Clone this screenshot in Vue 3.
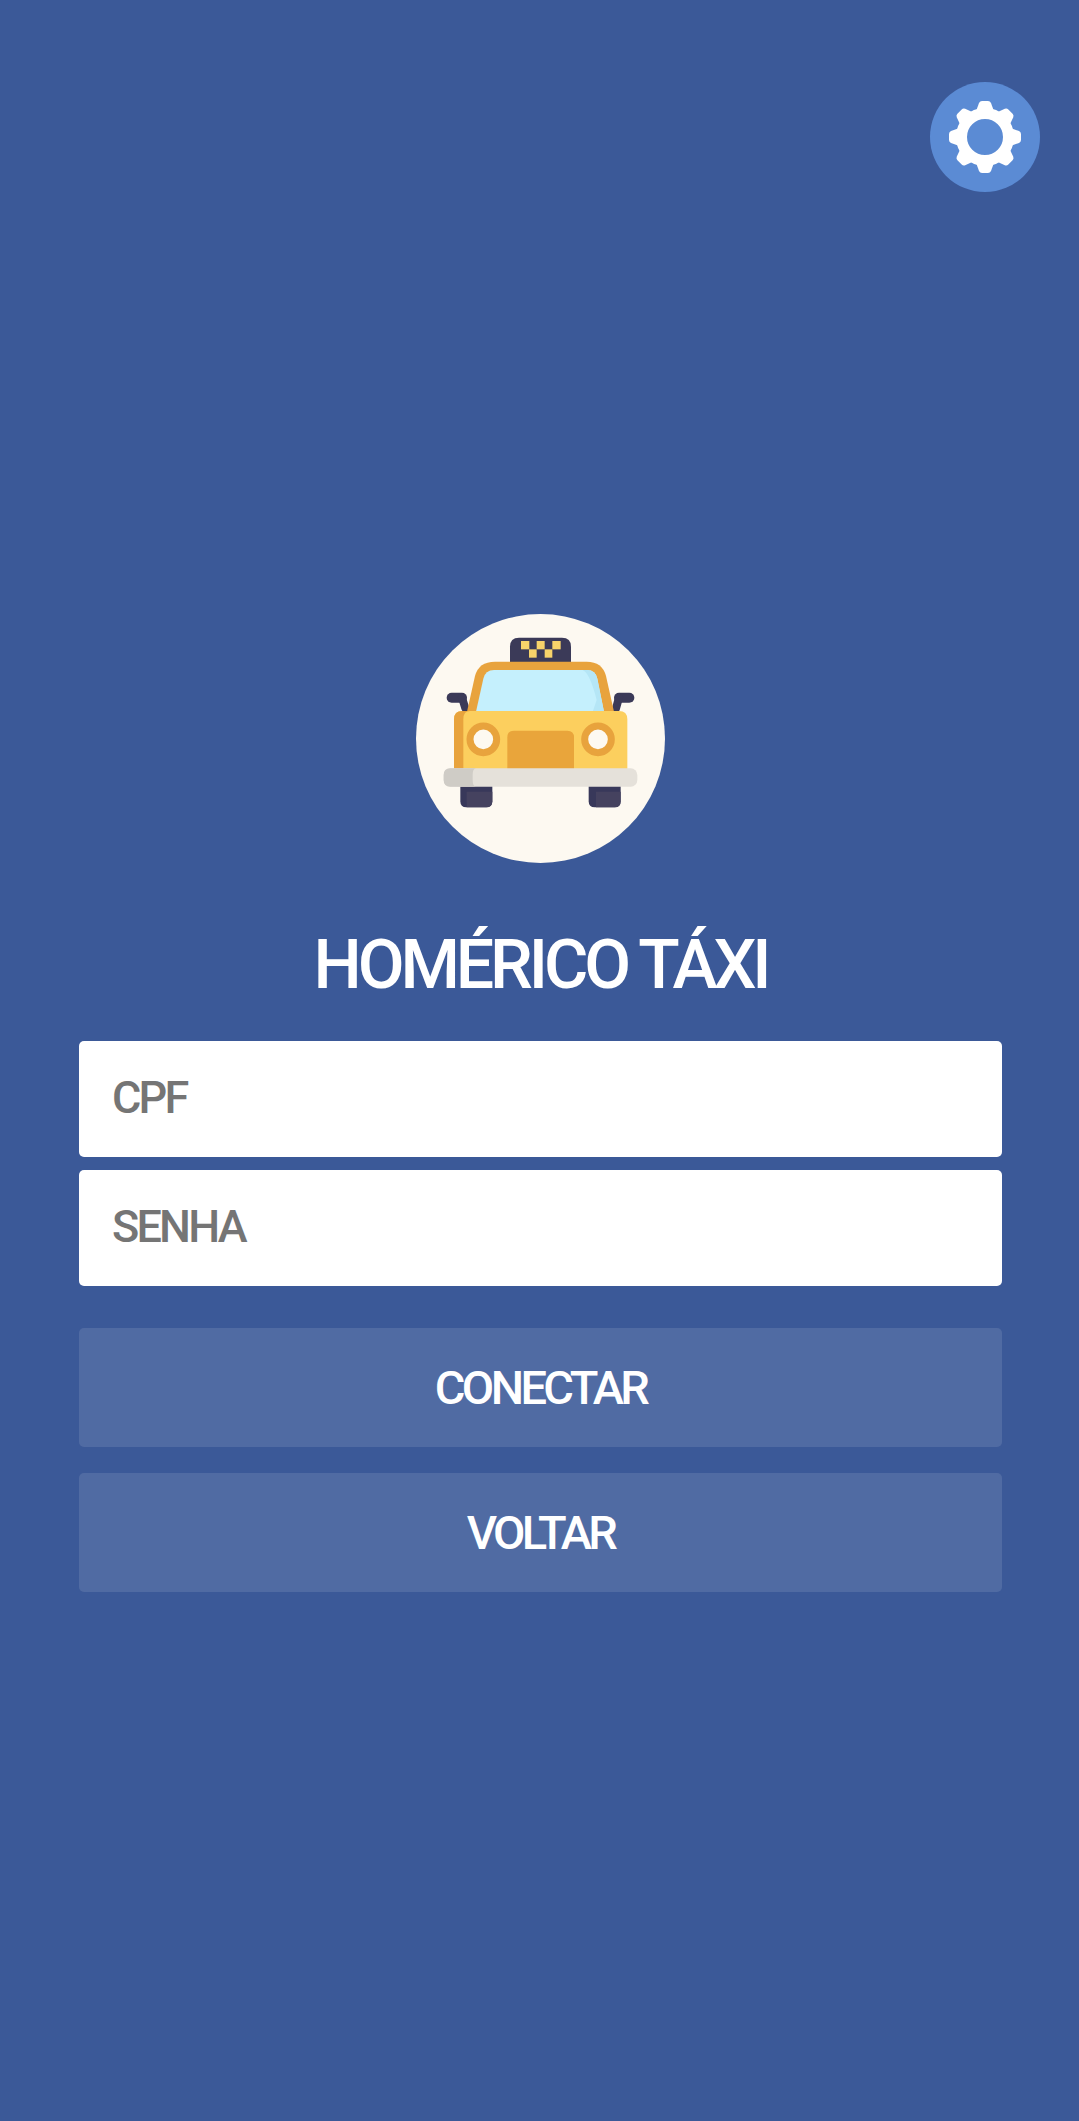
<template>
  <div class="login-page">
    <div class="top-bar">
      <button class="settings-btn" type="button" aria-label="Configurações">
        <svg viewBox="0 0 80 80" width="80" height="80">
          <path
            v-for="angle in toothAngles"
            :key="angle"
            d="M29 20L34 6Q35 4 37 4H43Q45 4 46 6L51 20Z"
            fill="#fff"
            :transform="`rotate(${angle} 40 40)`"
          />
          <circle cx="40" cy="40" r="23.5" fill="none" stroke="#fff" stroke-width="11" />
        </svg>
      </button>
    </div>

    <div class="login-content">
      <svg class="logo" viewBox="48 42 747 747" width="249" height="249">
        <circle cx="421.5" cy="415.5" r="373.5" fill="#fdf9f1" />

        <!-- placa do taxi -->
        <path d="M330 190V140Q330 113 357 113H486Q513 113 513 140V190Z" fill="#3b3a58" />
        <g fill="#f7d36a">
          <rect x="363" y="123" width="25" height="25" />
          <rect x="410" y="123" width="24" height="25" />
          <rect x="457" y="123" width="25" height="25" />
          <rect x="387" y="148" width="23" height="25" />
          <rect x="434" y="148" width="23" height="25" />
        </g>

        <!-- retrovisores -->
        <g fill="none" stroke="#3b3a58" stroke-linecap="round" stroke-linejoin="round">
          <path d="M155 293H186" stroke-width="30" />
          <path d="M186 293L196 325" stroke-width="24" />
          <path d="M688 293H657" stroke-width="30" />
          <path d="M657 293L648 325" stroke-width="24" />
        </g>

        <!-- cabine -->
        <path d="M200 340L225 228Q236 185 285 185H560Q607 185 618 228L643 340Z" fill="#e8a33d" />
        <path d="M228 335L250 236Q256 210 282 210H562Q586 210 592 236L612 335Z" fill="#c5f0fd" />
        <path d="M562 210Q586 210 592 236L612 335H578L590 300Q570 220 548 210Z" fill="#b5e6f6" />

        <!-- carroceria -->
        <path d="M162 510V358Q162 333 187 333H657Q682 333 682 358V510Z" fill="#fccf5e" />
        <path d="M162 510V358Q162 333 187 333H210Q190 333 190 358V510Z" fill="#e8a33d" />
        <circle cx="250" cy="418" r="40" fill="#fdf9f1" stroke="#e8a33d" stroke-width="21" />
        <circle cx="594" cy="418" r="40" fill="#fdf9f1" stroke="#e8a33d" stroke-width="21" />
        <path d="M322 510V412Q322 392 342 392H502Q522 392 522 412V510Z" fill="#e9a53b" />

        <!-- rodas -->
        <path d="M181 555H277V604Q277 622 259 622H199Q181 622 181 604Z" fill="#38385a" />
        <path d="M200 575H277V604Q277 622 259 622H200Z" fill="#45425f" />
        <path d="M566 555H662V604Q662 622 644 622H584Q566 622 566 604Z" fill="#38385a" />
        <path d="M588 575H662V604Q662 622 644 622H588Z" fill="#45425f" />

        <!-- para-choque -->
        <rect x="131" y="505" width="581" height="55" rx="20" fill="#e5e1da" />
        <path d="M151 505H228Q218 505 218 525V540Q218 560 228 560H151Q131 560 131 540V525Q131 505 151 505Z" fill="#cfccc6" />
      </svg>

      <h1 class="title">HOMÉRICO TÁXI</h1>

      <form class="login-form" @submit.prevent>
        <input v-model="cpf" class="field" type="text" placeholder="CPF" />
        <input v-model="senha" class="field" type="password" placeholder="SENHA" />
        <button class="action-btn first" type="submit">CONECTAR</button>
        <button class="action-btn" type="button">VOLTAR</button>
      </form>
    </div>
  </div>
</template>

<script setup>
import { ref } from 'vue'

const cpf = ref('')
const senha = ref('')
const toothAngles = [0, 45, 90, 135, 180, 225, 270, 315]
</script>

<style scoped>
.login-page {
  min-height: 100vh;
  background: #3b5998;
  font-family: Roboto, "Liberation Sans", sans-serif;
  box-sizing: border-box;
  padding: 82px 77px 0 79px;
}

.top-bar {
  display: flex;
  justify-content: flex-end;
  margin-right: -38px;
}

.settings-btn {
  width: 110px;
  height: 110px;
  border: none;
  border-radius: 50%;
  padding: 0;
  background: #5b8bd4;
  display: flex;
  align-items: center;
  justify-content: center;
  cursor: pointer;
}

.login-content {
  display: flex;
  flex-direction: column;
  align-items: center;
  margin-top: 422px;
}

.logo {
  display: block;
}

.title {
  margin: 62px 0 36px;
  font-size: 68px;
  line-height: 80px;
  font-weight: 500;
  letter-spacing: -4.1px;
  color: #fff;
  white-space: nowrap;
}

.login-form {
  width: 100%;
  display: flex;
  flex-direction: column;
  gap: 13px;
}

.field {
  height: 116px;
  box-sizing: border-box;
  border: none;
  border-radius: 5px;
  background: #fff;
  padding: 0 33px 4px;
  font-family: inherit;
  font-size: 45px;
  font-weight: 500;
  letter-spacing: -2.8px;
  color: #333;
  outline: none;
}

.field::placeholder {
  color: #757575;
  opacity: 1;
}

.action-btn {
  height: 119px;
  margin-top: 13px;
  border: none;
  border-radius: 5px;
  background: rgba(255, 255, 255, 0.11);
  font-family: inherit;
  font-size: 47px;
  font-weight: 500;
  letter-spacing: -3.6px;
  color: #fff;
  cursor: pointer;
}

.action-btn.first {
  margin-top: 29px;
}
</style>

<style>
body {
  background: #3b5998;
}
</style>
